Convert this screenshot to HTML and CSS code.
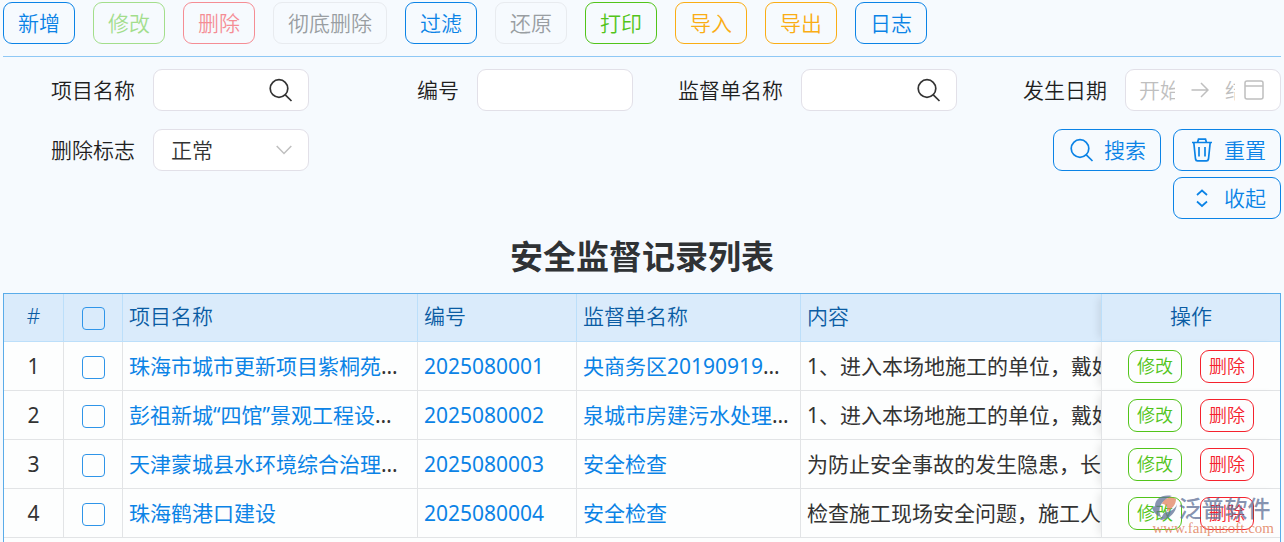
FILE: index.html
```
<!DOCTYPE html>
<html lang="zh-CN">
  <head>
    <meta charset="UTF-8" />
    <meta name="viewport" content="width=device-width, initial-scale=1.0" />
    <title>安全监督记录列表</title>
    <link rel="stylesheet" href="styles.css">
  </head>
  <body>
    <div class="toolbar">
      <button class="btn">新增</button>
      <button class="btn btn-green" disabled>修改</button>
      <button class="btn btn-red" disabled>删除</button>
      <button class="btn btn-gray" disabled>彻底删除</button>
      <button class="btn">过滤</button>
      <button class="btn btn-gray" disabled>还原</button>
      <button class="btn btn-green">打印</button>
      <button class="btn btn-orange">导入</button>
      <button class="btn btn-orange">导出</button>
      <button class="btn">日志</button>
    </div>

    <form class="search-form">
      <div class="field">
        <label for="project">项目名称</label>
        <div class="control">
          <input type="text" id="project" />
          <svg class="icon" viewBox="0 0 24 24"><circle cx="10" cy="10.5" r="8.8" /><path d="M16.3 16.8 L22.5 23" /></svg>
        </div>
      </div>
      <div class="field">
        <label for="code">编号</label>
        <div class="control">
          <input type="text" id="code" />
        </div>
      </div>
      <div class="field">
        <label for="sheet">监督单名称</label>
        <div class="control">
          <input type="text" id="sheet" />
          <svg class="icon" viewBox="0 0 24 24"><circle cx="10" cy="10.5" r="8.8" /><path d="M16.3 16.8 L22.5 23" /></svg>
        </div>
      </div>
      <div class="field">
        <label for="dateStart">发生日期</label>
        <div class="control date-range">
          <input type="text" id="dateStart" class="date-start" placeholder="开始日期" />
          <svg class="icon-arrow" viewBox="0 0 18 18"><path d="M0.5 9 H17 M10 2 L17 9 L10 16" /></svg>
          <input type="text" class="date-end" placeholder="结束日期" aria-label="结束日期" />
          <svg class="icon-date" viewBox="0 0 20 20"><rect x="1" y="1" width="18" height="18" rx="2" /><path d="M1 6 H19" /></svg>
        </div>
      </div>
      <div class="field">
        <label for="deleteFlag">删除标志</label>
        <div class="control">
          <select id="deleteFlag">
            <option>正常</option>
            <option>已删除</option>
          </select>
          <svg class="icon-down" viewBox="0 0 16 10"><path d="M0.7 1 L8 8.5 L15.3 1" /></svg>
        </div>
      </div>
      <div class="form-buttons">
        <button type="button" class="btn btn-icon">
          <svg class="icon" viewBox="0 0 24 24"><circle cx="10" cy="10.5" r="8.8" /><path d="M16.3 16.8 L22.5 23" /></svg>
          搜索
        </button>
        <button type="button" class="btn btn-icon">
          <svg class="icon" viewBox="0 0 24 24"><path d="M2 4.5 H22 M7.5 4.5 L8.5 1.2 H15.5 L16.5 4.5 M3.8 4.5 L5.5 21 Q5.8 22.8 7.5 22.8 H16.5 Q18.2 22.8 18.5 21 L20.2 4.5 M9 9 V18.5 M15 9 V18.5" /></svg>
          重置
        </button>
        <button type="button" class="btn btn-icon">
          <svg class="icon" viewBox="0 0 24 24"><path d="M7 9 L12 4.5 L17 9 M7 15.5 L12 20 L17 15.5" /></svg>
          收起
        </button>
      </div>
    </form>

    <h1>安全监督记录列表</h1>

    <div class="table-wrap">
      <table>
        <colgroup>
          <col class="col-no" />
          <col class="col-check" />
          <col class="col-project" />
          <col class="col-code" />
          <col class="col-sheet" />
          <col />
          <col class="col-action" />
        </colgroup>
        <thead>
          <tr>
            <th class="center">#</th>
            <th class="center check"><input type="checkbox" aria-label="全选" /></th>
            <th>项目名称</th>
            <th>编号</th>
            <th>监督单名称</th>
            <th class="content">内容</th>
            <th class="action">操作</th>
          </tr>
        </thead>
        <tbody>
          <tr>
            <td class="center">1</td>
            <td class="center"><input type="checkbox" aria-label="选择 1" /></td>
            <td><a href="#">珠海市城市更新项目紫桐苑建设工程</a></td>
            <td><a href="#">2025080001</a></td>
            <td><a href="#">央商务区20190919项目</a></td>
            <td class="content">1、进入本场地施工的单位，戴好</td>
            <td class="action">
              <div class="actions">
                <button class="btn btn-small btn-green">修改</button>
                <button class="btn btn-small btn-red">删除</button>
              </div>
            </td>
          </tr>
          <tr>
            <td class="center">2</td>
            <td class="center"><input type="checkbox" aria-label="选择 2" /></td>
            <td><a href="#">彭祖新城“四馆”景观工程设计项目</a></td>
            <td><a href="#">2025080002</a></td>
            <td><a href="#">泉城市房建污水处理工程</a></td>
            <td class="content">1、进入本场地施工的单位，戴好</td>
            <td class="action">
              <div class="actions">
                <button class="btn btn-small btn-green">修改</button>
                <button class="btn btn-small btn-red">删除</button>
              </div>
            </td>
          </tr>
          <tr>
            <td class="center">3</td>
            <td class="center"><input type="checkbox" aria-label="选择 3" /></td>
            <td><a href="#">天津蒙城县水环境综合治理工程</a></td>
            <td><a href="#">2025080003</a></td>
            <td><a href="#">安全检查</a></td>
            <td class="content">为防止安全事故的发生隐患，长期</td>
            <td class="action">
              <div class="actions">
                <button class="btn btn-small btn-green">修改</button>
                <button class="btn btn-small btn-red">删除</button>
              </div>
            </td>
          </tr>
          <tr>
            <td class="center">4</td>
            <td class="center"><input type="checkbox" aria-label="选择 4" /></td>
            <td><a href="#">珠海鹤港口建设</a></td>
            <td><a href="#">2025080004</a></td>
            <td><a href="#">安全检查</a></td>
            <td class="content">检查施工现场安全问题，施工人</td>
            <td class="action">
              <div class="actions">
                <button class="btn btn-small btn-green">修改</button>
                <button class="btn btn-small btn-red">删除</button>
              </div>
            </td>
          </tr>
        </tbody>
      </table>
      <div class="watermark">
        <div class="watermark-name">
          <svg class="watermark-logo" viewBox="0 0 26 26">
            <path class="logo-blue" d="M20 1 C10 -1 3 4 3 11 L0 13 C2 18 5 21 9 22 C5 14 9 5 20 1 Z" />
            <path class="logo-orange" d="M10 9 C12 3 19 1 24 4 C24 10 20 14 14 17 C17 12 14 9 10 9 Z" />
            <path class="logo-blue" d="M25 9 C23 15 17 17 12 18 L8 25 C17 25 24 18 25 9 Z" />
          </svg>
          <span>泛普软件</span>
        </div>
        <div class="watermark-url">www.fanpusoft.com</div>
      </div>
    </div>
  </body>
</html>
```

FILE: styles.css
```
* {
  box-sizing: border-box;
}
body {
  display: flex;
  flex-direction: column;
  min-height: 100vh;
  margin: 0;
  padding: 2px 3px 0;
  background-color: #f6fafe;
  color: #333;
  font-family: "Noto Sans", "Noto Sans CJK SC", sans-serif;
  font-size: 21px;
  line-height: 30px;
}
button,
input,
select {
  font: inherit;
}
svg {
  fill: none;
  stroke: currentColor;
}
a {
  color: #0b83e6;
  text-decoration: none;
}

/* 按钮 */
.btn {
  height: 42px;
  padding: 0 14px;
  border: 1px solid currentColor;
  border-radius: 9px;
  background: transparent;
  color: #0b83e6;
  font-weight: 350;
  white-space: nowrap;
  cursor: pointer;
}
.btn-green {
  color: #52c41a;
}
.btn-red {
  color: #f5222d;
}
.btn-orange {
  color: #faad14;
}
.btn:disabled {
  opacity: 0.5;
  cursor: default;
}
.btn-gray:disabled {
  border-color: #e8ebef;
  color: #999ea2;
  opacity: 1;
}
.btn-icon {
  display: flex;
  align-items: center;
  gap: 10px;
  padding: 0 14px 0 16px;
}
.btn-small {
  height: 33px;
  padding: 0 8px;
  font-size: 18px;
  line-height: 28px;
}

.toolbar {
  display: flex;
  flex-wrap: wrap;
  gap: 18px;
  padding-bottom: 12px;
  border-bottom: 1px solid #8fc8f5;
}

/* 查询条件 */
.search-form {
  display: grid;
  grid-template-columns: repeat(4, minmax(0, 1fr));
  gap: 18px;
  padding-top: 12px;
}
.field {
  display: flex;
  gap: 18px;
  height: 42px;
}
.field label {
  flex: 0 0 132px;
  color: #1f1f1f;
  font-weight: 350;
  line-height: 42px;
  text-align: right;
}
.control {
  display: flex;
  flex: 1;
  align-items: center;
  position: relative;
  min-width: 0;
  border: 1px solid #e2e0e8;
  border-radius: 9px;
  background-color: #fff;
}
.control input,
.control select {
  flex: 1;
  min-width: 0;
  height: 40px;
  padding: 0 17px;
  border: none;
  outline: none;
  background: transparent;
  color: #333;
  font-weight: 350;
  appearance: none;
}
.icon {
  flex: none;
  width: 24px;
  height: 24px;
  stroke-width: 1.7;
}
.control .icon {
  margin-right: 15px;
}
.icon-down {
  position: absolute;
  right: 16px;
  width: 16px;
  height: 10px;
  color: #bfbfbf;
  stroke-width: 1.5;
  pointer-events: none;
}
.control.date-range {
  padding: 0 16px 0 13px;
  color: #bfbfbf;
}
.date-range input {
  padding: 0;
}
.date-range input::placeholder {
  color: #bfbfbf;
}
.date-range .date-start {
  flex: 0 0 36px;
}
.date-range .date-end {
  flex: 0 0 10px;
}
.icon-arrow {
  flex: none;
  width: 18px;
  height: 18px;
  margin: 0 16px;
  stroke-width: 1.5;
}
.icon-date {
  flex: none;
  width: 20px;
  height: 20px;
  margin-left: auto;
  stroke-width: 1.5;
}
.form-buttons {
  display: flex;
  flex-wrap: wrap;
  grid-column: 4;
  justify-content: flex-end;
  gap: 6px 12px;
}

h1 {
  margin: 14px 0 12px;
  color: #2f3235;
  font-size: 33px;
  line-height: 48px;
  text-align: center;
}

/* 列表 */
.table-wrap {
  flex: 1;
  position: relative;
  border: 1px solid #5aace9;
  border-bottom: none;
  background-color: #fdfefe;
}
table {
  width: 100%;
  border-spacing: 0;
  table-layout: fixed;
}
.col-no {
  width: 60px;
}
.col-check {
  width: 59px;
}
.col-project {
  width: 295px;
}
.col-code {
  width: 159px;
}
.col-sheet {
  width: 224px;
}
.col-action {
  width: 179px;
}
th,
td {
  height: 49px;
  padding: 0 6px;
  overflow: hidden;
  border-right: 1px solid #e2e4e6;
  border-bottom: 1px solid #e2e4e6;
  text-align: left;
  text-overflow: ellipsis;
  white-space: nowrap;
}
th {
  height: 48px;
  padding-bottom: 4px;
  border-color: #bcdffa;
  background-color: #daebfb;
  color: #0a5ca3;
  font-weight: 350;
}
th.check {
  padding-bottom: 0;
}
th.center,
td.center {
  text-align: center;
}
th.content,
td.content {
  padding-right: 0;
  border-right: none;
  text-overflow: clip;
}
th.action,
td.action {
  position: sticky;
  right: 0;
  overflow: visible;
  border-right: none;
  border-left: 1px solid #e2e4e6;
  box-shadow: -6px 0 8px -4px rgba(0, 0, 0, 0.1);
  text-align: center;
}
th.action {
  border-left-color: #bcdffa;
}
td.action {
  background-color: #fdfefe;
}
.actions {
  display: flex;
  justify-content: center;
  gap: 18px;
}
input[type="checkbox"] {
  display: block;
  width: 23px;
  height: 23px;
  margin: 2px auto 0;
  border: 1px solid #2f95e9;
  border-radius: 4px;
  background-color: transparent;
  appearance: none;
}

.watermark {
  position: absolute;
  top: 201px;
  right: 6px;
  pointer-events: none;
}
.watermark-name {
  display: flex;
  align-items: center;
  color: rgba(95, 112, 150, 0.75);
  font-size: 23px;
  font-weight: 500;
  line-height: 26px;
}
.watermark-logo {
  width: 26px;
  height: 26px;
  stroke: none;
}
.logo-blue {
  fill: rgba(95, 112, 150, 0.75);
}
.logo-orange {
  fill: rgba(226, 130, 95, 0.75);
}
.watermark-url {
  color: rgba(226, 130, 95, 0.85);
  font-family: "Liberation Serif", serif;
  font-size: 15px;
  line-height: 14px;
  text-align: right;
}
```
